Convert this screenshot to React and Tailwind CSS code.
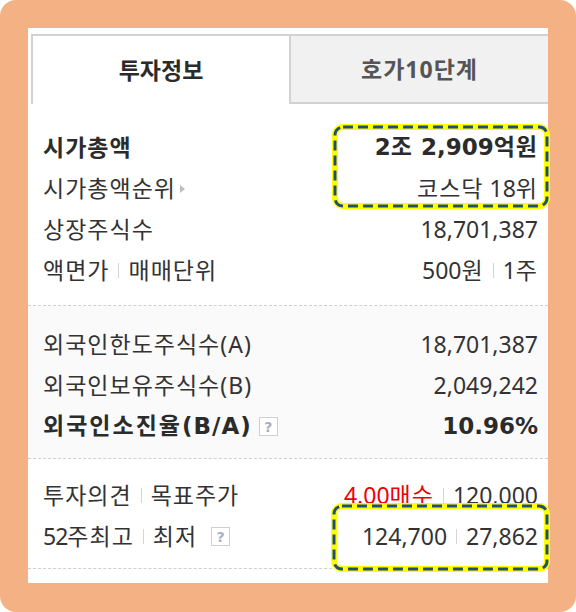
import React from 'react';

const K = ({ children }) => <span className="tracking-[1px]">{children}</span>;

const Bar = () => <span className="inline-block w-px h-[15px] bg-[#d4d4d4] mx-[9px]" />;

const Help = ({ className = 'ml-[7px]' }) => (
  <span
    className={`inline-flex shrink-0 items-center justify-center w-[19px] h-[19px] border border-[#cfcfcf] bg-white font-['DejaVu_Sans',sans-serif] text-[14px] font-bold leading-none text-[#a3b0c2] tracking-normal ${className}`}
  >
    ?
  </span>
);

function Row({ label, value, bold }) {
  return (
    <div className="flex items-center justify-between h-[41px]">
      <div className={`flex items-center tracking-[1px] ${bold ? 'font-bold text-[#2b2b2b]' : ''}`}>{label}</div>
      <div className={`flex items-center ${bold ? "font-bold text-[#2b2b2b] font-['DejaVu_Sans','Noto_Sans_CJK_KR',sans-serif]" : ''}`}>
        {value}
      </div>
    </div>
  );
}

function Highlight() {
  return (
    <svg className="absolute inset-0" width="100%" height="100%">
      <rect x="3" y="3" width="calc(100% - 6px)" height="calc(100% - 6px)" rx="8" fill="none" stroke="#ffff00" strokeWidth="6" />
      <rect x="3" y="3" width="calc(100% - 6px)" height="calc(100% - 6px)" rx="8" fill="none" stroke="#1f4e79" strokeWidth="3" strokeDasharray="10 5" />
    </svg>
  );
}

export default function App() {
  return (
    <div className="w-[576px] h-[612px] bg-white font-['Noto_Sans','Noto_Sans_CJK_KR',sans-serif] text-[23px] text-[#333]">
      <div className="h-full rounded-[16px] bg-[#f4b183] pt-[28px] pl-[28px] pr-[28px] pb-[29px]">
        <div className="relative h-full bg-white">
          {/* Tabs */}
          <div className="flex pl-[3px] pt-[6px]">
            <div className="w-[260px] h-[70px] flex items-center justify-center border-2 border-b-0 border-[#d2d2d2] bg-white font-bold text-[#2b2b2b]">
              투자정보
            </div>
            <div className="flex-1 h-[70px] flex items-center justify-center border-y-2 border-[#d2d2d2] bg-[#f1f1f1] font-bold tracking-[1px] text-[#555]">
              호가10단계
            </div>
          </div>

          {/* 시가총액 */}
          <div className="pl-[15px] pr-[10px] pt-[23px] pb-[14px] border-b border-dashed border-[#cfcfcf]">
            <Row
              bold
              label="시가총액"
              value={
                <>
                  2<K>조</K>&nbsp;2,909<K>억원</K>
                </>
              }
            />
            <Row
              label={
                <>
                  시가총액순위
                  <span className="inline-block ml-[4px] border-y-[4px] border-y-transparent border-l-[5px] border-l-[#bdbdbd]" />
                </>
              }
              value={
                <>
                  <K>코스닥</K>&nbsp;18<K>위</K>
                </>
              }
            />
            <Row label="상장주식수" value="18,701,387" />
            <Row
              label={
                <>
                  액면가
                  <Bar />
                  매매단위
                </>
              }
              value={
                <>
                  500<K>원</K>
                  <Bar />1<K>주</K>
                </>
              }
            />
          </div>

          {/* 외국인 */}
          <div className="pl-[15px] pr-[10px] pt-[18px] pb-[11px] bg-[#fafafa] border-b border-dashed border-[#cfcfcf]">
            <Row label="외국인한도주식수(A)" value="18,701,387" />
            <Row label="외국인보유주식수(B)" value="2,049,242" />
            <Row
              bold
              label={
                <>
                  <span className="font-['DejaVu_Sans','Noto_Sans_CJK_KR',sans-serif] tracking-[1px]">
                    <span className="tracking-[2px]">외국인소진율</span>(B/A)
                  </span>
                  <Help />
                </>
              }
              value="10.96%"
            />
          </div>

          {/* 투자의견 */}
          <div className="pl-[15px] pr-[10px] pt-[16px] pb-[11px] border-b border-dashed border-[#cfcfcf]">
            <Row
              label={
                <>
                  투자의견
                  <Bar />
                  목표주가
                </>
              }
              value={
                <>
                  <span className="text-[#f00000]">
                    4.00<K>매수</K>
                  </span>
                  <Bar />
                  120,000
                </>
              }
            />
            <Row
              label={
                <>
                  <span className="tracking-[-1px]">52</span>주최고
                  <Bar />
                  최저
                  <Help className="ml-[14px]" />
                </>
              }
              value={
                <>
                  124,700
                  <Bar />
                  27,862
                </>
              }
            />
          </div>

          {/* annotation boxes */}
          <div className="absolute left-[304px] top-[96px] w-[218px] h-[85px]">
            <Highlight />
          </div>
          <div className="absolute left-[303px] top-[475px] w-[219px] h-[69px]">
            <Highlight />
          </div>
        </div>
      </div>
    </div>
  );
}
